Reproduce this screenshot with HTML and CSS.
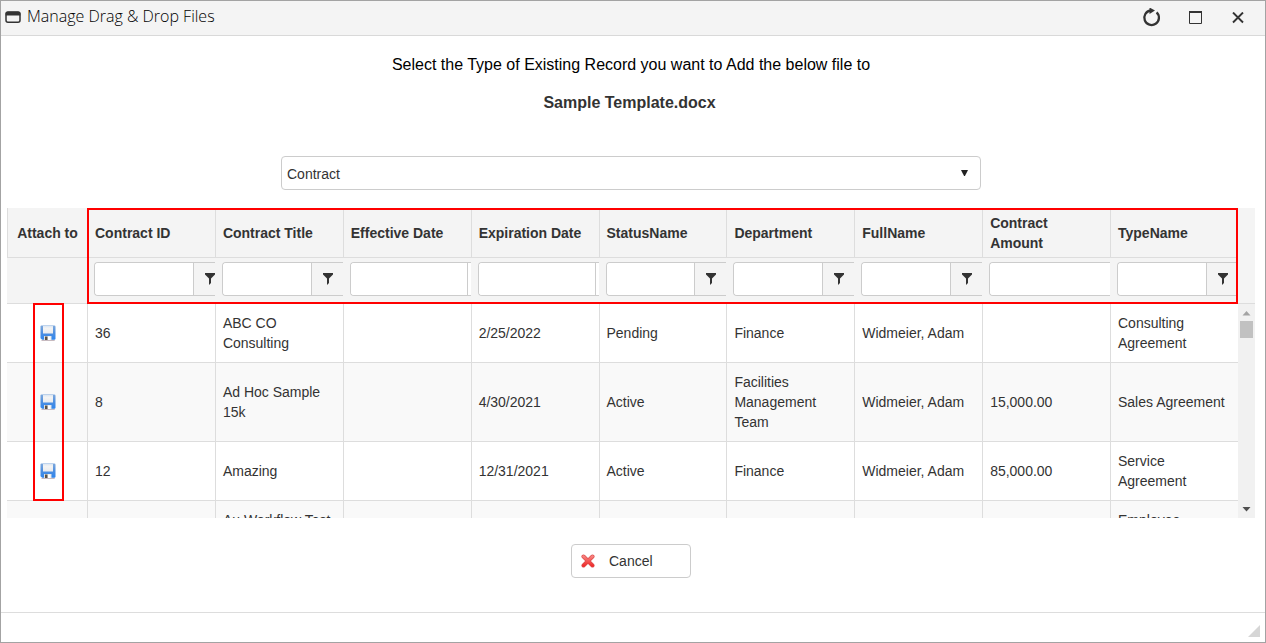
FILE: index.html
```html
<!DOCTYPE html>
<html lang="en">
<head>
<meta charset="utf-8">
<title>Manage Drag &amp; Drop Files</title>
<link rel="stylesheet" href="styles.css">
</head>
<body>
<svg class="sprite" width="0" height="0" aria-hidden="true">
  <defs>
    <linearGradient id="disk-blue" x1="0" y1="0" x2="0" y2="1">
      <stop offset="0" stop-color="#7fa9dc"/><stop offset="0.5" stop-color="#4f8fe0"/><stop offset="1" stop-color="#2f86ee"/>
    </linearGradient>
    <linearGradient id="disk-label" x1="0" y1="0" x2="0" y2="1">
      <stop offset="0" stop-color="#dbe6f3"/><stop offset="0.3" stop-color="#f4f4f4"/><stop offset="1" stop-color="#e9ebee"/>
    </linearGradient>
    <linearGradient id="cross-red" x1="0" y1="0" x2="0" y2="1">
      <stop offset="0" stop-color="#f77f7c"/><stop offset="1" stop-color="#f0302f"/>
    </linearGradient>
    <symbol id="disk" viewBox="0 0 16 16">
      <path d="M1.500 15.300h13.200" stroke="#b9a9b0" stroke-width="1"/>
      <path d="M1.500.5h12.700q1.300 0 1.300 1.300v11.700q0 1.300-1.300 1.300H2.300L.5 13.200V1.500Q.5.5 1.500.5z" fill="url(#disk-blue)"/>
      <path d="M3 1h10v7.500H3z" fill="url(#disk-label)"/>
      <path d="M4 11h7.500v4H4z" fill="#dfe3e6"/>
      <path d="M5 11.500h2.500V15H5z" fill="#5b5348"/>
      <path d="M8 11.500h2.500V15H8z" fill="#fff"/>
    </symbol>
    <symbol id="funnel" viewBox="0 0 10 12">
      <path d="M0 0h10v1.500L6 5.500v4.500L4 12V5.500L0 1.500z" fill="#333"/>
    </symbol>
  </defs>
</svg>
<div class="window">
  <header class="titlebar">
    <svg class="title-icon" viewBox="0 0 16 12" aria-hidden="true"><rect x="1" y="0.900" width="14" height="10.300" rx="2" fill="#f4f4f4" stroke="#333" stroke-width="1.500"/><path d="M.7 4.500V2.600Q.7.700 2.600.7h10.800q1.900 0 1.900 1.900v1.900z" fill="#333"/></svg>
    <h1 class="title">Manage Drag &amp; Drop Files</h1>
    <div class="actions">
      <button type="button" class="action" aria-label="Refresh"><svg width="20" height="20" viewBox="0 0 20 20" aria-hidden="true"><path d="M15.600 4.400A7.300 7.300 0 1 1 9.600 2.500" fill="none" stroke="#333" stroke-width="2.300"/><path d="M8.500 -0.500L14 2.500 8.500 6z" fill="#333"/></svg></button>
      <button type="button" class="action" aria-label="Maximize"><svg width="14" height="14" viewBox="0 0 14 14" aria-hidden="true"><path d="M1.500 .5h12v12h-12z" fill="none" stroke="#333"/><path d="M1 0h13v2H1z" fill="#333"/></svg></button>
      <button type="button" class="action" aria-label="Close"><svg width="12" height="12" viewBox="0 0 12 12" aria-hidden="true"><path d="M1 .5l10 10M11 .5L1 10.500" stroke="#333" stroke-width="1.900"/></svg></button>
    </div>
  </header>

  <main class="content">
    <label class="prompt" for="record-type">Select the Type of Existing Record you want to Add the below file to</label>
    <p class="filename">Sample Template.docx</p>

    <div class="picker">
      <select id="record-type" class="picker-select"><option>Contract</option></select>
      <svg class="picker-arrow" viewBox="0 0 8 8" aria-hidden="true"><path d="M0 0.500h8L4.500 7.500h-1z" fill="#222"/></svg>
    </div>

    <section class="grid" aria-label="Contracts">
      <div class="grid-head">
        <table class="table">
          <colgroup><col class="col-attach"><col span="9"></colgroup>
          <thead>
            <tr class="names">
              <th scope="col" class="center">Attach to</th><th scope="col">Contract ID</th><th scope="col">Contract Title</th><th scope="col">Effective Date</th><th scope="col">Expiration Date</th><th scope="col">StatusName</th><th scope="col">Department</th><th scope="col">FullName</th><th scope="col">Contract Amount</th><th scope="col">TypeName</th>
            </tr>
            <tr class="filters">
              <td></td>
              <td><div class="filter"><input class="filter-input id" aria-label="Filter Contract ID"><button type="button" class="filter-btn" aria-label="Contract ID filter"><svg class="funnel"><use href="#funnel"/></svg></button></div></td>
              <td><div class="filter"><input class="filter-input" aria-label="Filter Contract Title"><button type="button" class="filter-btn" aria-label="Contract Title filter"><svg class="funnel"><use href="#funnel"/></svg></button></div></td>
              <td><div class="filter date"><input class="filter-input" aria-label="Filter Effective Date"></div></td>
              <td><div class="filter date"><input class="filter-input" aria-label="Filter Expiration Date"></div></td>
              <td><div class="filter"><input class="filter-input" aria-label="Filter StatusName"><button type="button" class="filter-btn" aria-label="StatusName filter"><svg class="funnel"><use href="#funnel"/></svg></button></div></td>
              <td><div class="filter"><input class="filter-input" aria-label="Filter Department"><button type="button" class="filter-btn" aria-label="Department filter"><svg class="funnel"><use href="#funnel"/></svg></button></div></td>
              <td><div class="filter"><input class="filter-input" aria-label="Filter FullName"><button type="button" class="filter-btn" aria-label="FullName filter"><svg class="funnel"><use href="#funnel"/></svg></button></div></td>
              <td><div class="filter amount"><input class="filter-input" aria-label="Filter Contract Amount"></div></td>
              <td><div class="filter"><input class="filter-input" aria-label="Filter TypeName"><button type="button" class="filter-btn" aria-label="TypeName filter"><svg class="funnel"><use href="#funnel"/></svg></button></div></td>
            </tr>
          </thead>
        </table>
        <div class="mark mark-columns"></div>
      </div>
      <div class="grid-body">
        <div class="grid-rows">
          <table class="table">
            <colgroup><col class="col-attach"><col span="9"></colgroup>
            <tbody>
              <tr><td class="attach-cell"><button type="button" class="attach" aria-label="Attach to contract 36"><svg class="disk"><use href="#disk"/></svg></button></td><td>36</td><td>ABC CO Consulting</td><td></td><td>2/25/2022</td><td>Pending</td><td>Finance</td><td>Widmeier, Adam</td><td></td><td>Consulting Agreement</td></tr>
              <tr><td class="attach-cell"><button type="button" class="attach" aria-label="Attach to contract 8"><svg class="disk"><use href="#disk"/></svg></button></td><td>8</td><td>Ad Hoc Sample 15k</td><td></td><td>4/30/2021</td><td>Active</td><td>Facilities Management Team</td><td>Widmeier, Adam</td><td>15,000.00</td><td>Sales Agreement</td></tr>
              <tr><td class="attach-cell"><button type="button" class="attach" aria-label="Attach to contract 12"><svg class="disk"><use href="#disk"/></svg></button></td><td>12</td><td>Amazing</td><td></td><td>12/31/2021</td><td>Active</td><td>Finance</td><td>Widmeier, Adam</td><td>85,000.00</td><td>Service Agreement</td></tr>
              <tr class="partial"><td></td><td></td><td>Au Workflow Test</td><td></td><td></td><td></td><td></td><td></td><td></td><td>Employee</td></tr>
            </tbody>
          </table>
        </div>
        <div class="scrollbar" aria-hidden="true">
          <svg class="scroll-arrow" viewBox="0 0 17 17"><path d="M4.500 11.500l4-4.500 4 4.500z" fill="#a3a3a3"/></svg>
          <div class="thumb"></div>
          <svg class="scroll-arrow end" viewBox="0 0 17 17"><path d="M4.500 6h8l-4 4.500z" fill="#505050"/></svg>
        </div>
      </div>
      <div class="mark mark-attach"></div>
    </section>

    <button type="button" class="cancel"><svg width="14" height="14" viewBox="0 0 14 14" aria-hidden="true"><path d="M2.500 2.500l9 9M11.500 2.500l-9 9" stroke="#d94a4a" stroke-width="4" stroke-linecap="round"/><path d="M2.500 2.500l9 9M11.500 2.500l-9 9" stroke="url(#cross-red)" stroke-width="2.800" stroke-linecap="round"/></svg>Cancel</button>
  </main>

  <footer class="statusbar"><svg class="grip" width="12" height="12" viewBox="0 0 12 12" aria-hidden="true"><path d="M12 0v12H0z" fill="#d6d6d6"/></svg></footer>
</div>
</body>
</html>
```
FILE: styles.css
```css
* { box-sizing: border-box; }

body {
  margin: 0;
  background: #fff;
  color: #333;
  font: 14px/20px "Liberation Sans", Arial, sans-serif;
}

button, input, select { font: inherit; color: inherit; }
button { cursor: pointer; }

.sprite { position: absolute; }

.window {
  display: flex;
  flex-direction: column;
  min-height: 100vh;
  border: 1px solid #a3a3a3;
}

.titlebar {
  display: flex;
  align-items: center;
  height: 35px;
  padding: 0 16px 0 4px;
  background: #f4f4f4;
  border-bottom: 1px solid #d9d9d9;
}
.title-icon { width: 16px; height: 12px; margin-bottom: 2px; }
.title {
  flex: 1;
  margin: 0 0 4px 6px;
  color: #000;
  font: 300 16px/22px "Open Sans", "Noto Sans", sans-serif;
}
.actions { display: flex; align-items: center; }
.action {
  display: flex;
  align-items: center;
  justify-content: center;
  width: 44px;
  height: 32px;
  padding: 0;
  border: 0;
  background: none;
}
.action:last-child { width: 42px; margin-right: -10px; }

.content {
  flex: 1;
  display: flex;
  flex-direction: column;
  align-items: center;
  padding: 19px 10px 34px 6px;
}
.prompt { font-size: 16px; color: #000; }
.filename { margin: 18px 3px 43px 0; font-size: 16px; font-weight: bold; }

.picker { position: relative; width: 700px; max-width: 100%; }
.picker-select {
  appearance: none;
  display: block;
  width: 100%;
  height: 34px;
  padding: 2px 24px 0 5px;
  border: 1px solid #ccc;
  border-radius: 4px;
  background: #fff;
}
.picker-arrow {
  position: absolute;
  top: 13px;
  right: 13px;
  width: 7px;
  height: 8px;
  pointer-events: none;
}

.grid { position: relative; width: 100%; margin: 18px 0 26px; }
.grid-head {
  position: relative;
  padding-right: 17px;
  background: #f4f4f4;
  border-bottom: 1px solid #ddd;
}
.table {
  width: 100%;
  table-layout: fixed;
  border-collapse: separate;
  border-spacing: 0;
}
.col-attach { width: 80px; }

.names th {
  height: 50px;
  padding: 4px 7px;
  border: 0 solid #ddd;
  border-width: 0 0 1px 1px;
  text-align: left;
}
.filters td { height: 45px; padding: 4px 0 7px 7px; }
.names .center { padding-left: 0; padding-right: 0; text-align: center; }

.filter {
  display: flex;
  height: 34px;
  border: 1px solid #ccc;
  border-right: 0;
  border-radius: 4px 0 0 4px;
  overflow: hidden;
}
.filter-input {
  flex: 1;
  min-width: 0;
  padding: 0 6px;
  border: 0;
  border-right: 1px solid #ccc;
  background: #fff;
}
.filter-input.id { flex: 0 0 99px; }
.filter-btn {
  display: flex;
  align-items: center;
  flex: 0 0 31px;
  padding: 0 0 0 11px;
  border: 0;
  background: #f4f4f4;
}
.filter-input.id + .filter-btn { flex: 1; }
.funnel { flex: none; width: 10px; height: 12px; }
.date { padding-right: 3px; background: #fff; }
.amount .filter-input { border-right: 0; }

.grid-body { display: flex; height: 214px; }
.grid-rows { flex: 1; min-width: 0; overflow: hidden; }
.grid-rows td {
  padding: 9px 7px;
  border: 0 solid #ddd;
  border-width: 0 0 1px 1px;
}
.grid-rows td:first-child { border-left: 0; }
.grid-rows tr:nth-child(even) { background: #f9f9f9; }
.grid-rows .partial td { vertical-align: top; height: 59px; }
.grid-rows .attach-cell { padding: 9px 0 9px 2px; }

.attach {
  display: block;
  width: 16px;
  height: 16px;
  margin: 0 auto;
  padding: 0;
  border: 0;
  background: none;
}
.disk { display: block; width: 16px; height: 16px; }

.scrollbar {
  display: flex;
  flex-direction: column;
  width: 17px;
  background: #f1f1f1;
}
.scroll-arrow { width: 17px; height: 17px; }
.end { margin-top: auto; }
.thumb { height: 17px; margin: 0 2px; background: #c1c1c1; }

/* Highlight frames over the grid */
.mark { position: absolute; border: 2px solid #f00; pointer-events: none; }
.mark-columns { top: 0; right: 17px; bottom: -1px; left: 80px; }
.mark-attach { top: 95px; left: 26px; width: 31px; height: 198px; }

.cancel {
  display: flex;
  align-items: center;
  gap: 14px;
  width: 120px;
  height: 34px;
  padding: 0 9px;
  border: 1px solid #ccc;
  border-radius: 4px;
  background: #fff;
}

.statusbar {
  display: flex;
  align-items: flex-end;
  justify-content: flex-end;
  height: 30px;
  padding: 5px;
  border-top: 1px solid #ddd;
}
```
